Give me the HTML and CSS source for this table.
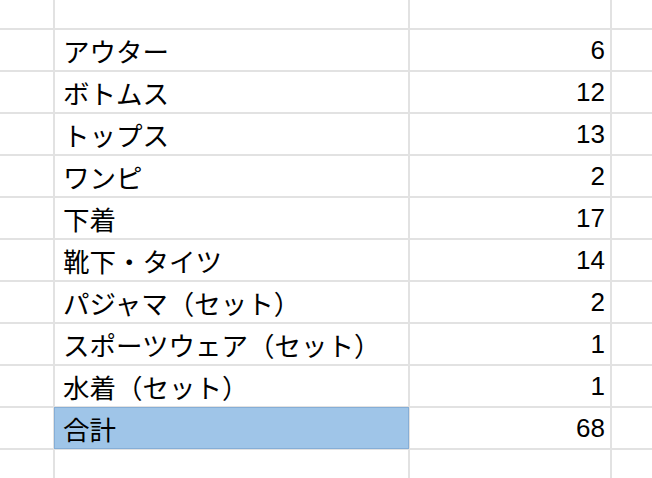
FILE: index.html
```html
<!DOCTYPE html>
<html lang="ja">
<head>
<meta charset="utf-8">
<title>集計</title>
<link rel="stylesheet" href="styles.css">
</head>
<body>
<div class="sheet">
  <div class="cell"></div><div class="cell"></div><div class="cell"></div><div class="cell"></div>

  <div class="cell"></div><div class="cell label">アウター</div><div class="cell num">6</div><div class="cell"></div>
  <div class="cell"></div><div class="cell label">ボトムス</div><div class="cell num">12</div><div class="cell"></div>
  <div class="cell"></div><div class="cell label">トップス</div><div class="cell num">13</div><div class="cell"></div>
  <div class="cell"></div><div class="cell label">ワンピ</div><div class="cell num">2</div><div class="cell"></div>
  <div class="cell"></div><div class="cell label">下着</div><div class="cell num">17</div><div class="cell"></div>
  <div class="cell"></div><div class="cell label">靴下・タイツ</div><div class="cell num">14</div><div class="cell"></div>
  <div class="cell"></div><div class="cell label">パジャマ（セット）</div><div class="cell num">2</div><div class="cell"></div>
  <div class="cell"></div><div class="cell label">スポーツウェア（セット）</div><div class="cell num">1</div><div class="cell"></div>
  <div class="cell"></div><div class="cell label">水着（セット）</div><div class="cell num">1</div><div class="cell"></div>
  <div class="cell"></div><div class="cell label total">合計</div><div class="cell num">68</div><div class="cell"></div>

  <div class="cell"></div><div class="cell"></div><div class="cell"></div><div class="cell"></div>
</div>
</body>
</html>
```
FILE: styles.css
```css
html, body {
  margin: 0;
  padding: 0;
  background: #ffffff;
  overflow: hidden;
}
.sheet {
  display: grid;
  grid-template-columns: 53px 353px 200px 40px;
  grid-template-rows: 28px repeat(10, 40px) 28px;
  gap: 2px;
  background: #e2e2e2;
  width: 652px;
  height: 478px;
  font-family: "Liberation Sans", "Noto Sans CJK JP", sans-serif;
  font-size: 26px;
  color: #000000;
}
.cell {
  background: #ffffff;
  display: flex;
  align-items: center;
  min-width: 0;
  white-space: nowrap;
}
.label {
  padding-left: 8px;
  font-family: "Noto Sans CJK JP", sans-serif;
  font-size: 26.5px;
}
.num {
  justify-content: flex-end;
  padding-right: 5px;
}
.total {
  background: #9fc5e8;
  margin: -1px;
  border: 1px solid #86aed6;
  padding-left: 8px;
}
```
